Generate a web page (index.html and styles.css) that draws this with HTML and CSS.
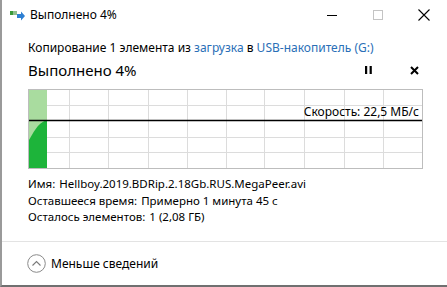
FILE: index.html
```html
<html lang="ru">
<head>
    <meta charset="UTF-8">
    <title>Выполнено 4%</title>
    <link rel="stylesheet" href="styles.css">
</head>
<body>
    <div class="window">
        <div class="titlebar">
            <svg class="app-icon" width="16" height="16" viewBox="0 0 16 16">
                <rect x="0" y="4" width="3" height="4" fill="#3a9a3a"/>
                <rect x="3" y="4" width="4" height="4" fill="#8fbf8f"/>
                <path d="M7 7H11V4.5L15 9L11 13.5V11H7Z" fill="#2d7fd3"/>
            </svg>
            <span class="title">Выполнено 4%</span>
            <div class="controls">
                <button class="ctl">
                    <svg width="10" height="10" viewBox="0 0 10 10"><line x1="0" y1="5.5" x2="10" y2="5.5" stroke="#000" stroke-width="1"/></svg>
                </button>
                <button class="ctl">
                    <svg width="10" height="10" viewBox="0 0 10 10"><rect x="0.5" y="0.5" width="9" height="9" fill="none" stroke="#c4c4c4" stroke-width="1"/></svg>
                </button>
                <button class="ctl">
                    <svg width="12" height="12" viewBox="0 0 12 12"><path d="M0.5 0.5L11.5 11.5M11.5 0.5L0.5 11.5" stroke="#000" stroke-width="1.1"/></svg>
                </button>
            </div>
        </div>

        <div class="content">
            <p class="source">Копирование 1 элемента из <a href="#">загрузка</a> в <a href="#">USB-накопитель (G:)</a></p>

            <div class="heading-row">
                <h1>Выполнено 4%</h1>
                <div class="actions">
                    <button class="act pause">
                        <svg width="7" height="8" viewBox="0 0 7 8"><rect x="0" y="0" width="2.2" height="8" fill="#000"/><rect x="4.6" y="0" width="2.2" height="8" fill="#000"/></svg>
                    </button>
                    <button class="act stop">
                        <svg width="9" height="9" viewBox="0 0 9 9"><path d="M1 1L8 8M8 1L1 8" stroke="#000" stroke-width="2"/></svg>
                    </button>
                </div>
            </div>

            <div class="chart">
                <svg width="393" height="78" viewBox="0 0 393 78">
                    <g stroke="#dcdcdc" stroke-width="1">
                        <line x1="40.5" y1="0" x2="40.5" y2="78"/>
                        <line x1="79.5" y1="0" x2="79.5" y2="78"/>
                        <line x1="119.5" y1="0" x2="119.5" y2="78"/>
                        <line x1="158.5" y1="0" x2="158.5" y2="78"/>
                        <line x1="197.5" y1="0" x2="197.5" y2="78"/>
                        <line x1="235.5" y1="0" x2="235.5" y2="78"/>
                        <line x1="275.5" y1="0" x2="275.5" y2="78"/>
                        <line x1="315.5" y1="0" x2="315.5" y2="78"/>
                        <line x1="354.5" y1="0" x2="354.5" y2="78"/>
                        <line x1="0" y1="15.5" x2="393" y2="15.5"/>
                        <line x1="0" y1="47.5" x2="393" y2="47.5"/>
                        <line x1="0" y1="62.5" x2="393" y2="62.5"/>
                    </g>
                    <rect x="0" y="0" width="18" height="78" fill="#a9dc9f"/>
                    <path d="M0 78V50C4 44 8 33 18 30V78Z" fill="#1db43a"/>
                    <line x1="0" y1="30.5" x2="393" y2="30.5" stroke="#000" stroke-width="1.3"/>
                </svg>
                <span class="speed">Скорость: 22,5 МБ/с</span>
            </div>

            <div class="details">
                <div class="row"><span class="label">Имя:</span><span class="value">Hellboy.2019.BDRip.2.18Gb.RUS.MegaPeer.avi</span></div>
                <div class="row"><span class="label">Оставшееся время:</span><span class="value">Примерно 1 минута 45 с</span></div>
                <div class="row"><span class="label">Осталось элементов:</span><span class="value">1 (2,08 ГБ)</span></div>
            </div>
        </div>

        <div class="footer">
            <button class="less">
                <svg width="19" height="19" viewBox="0 0 19 19">
                    <circle cx="9.5" cy="9.5" r="8.8" fill="none" stroke="#8a8a8a" stroke-width="1"/>
                    <path d="M5.5 11.5L9.5 7.5L13.5 11.5" fill="none" stroke="#7a7a7a" stroke-width="1.1"/>
                </svg>
                <span>Меньше сведений</span>
            </button>
        </div>
    </div>
</body>
</html>
```

FILE: styles.css
```css
html, body {
    margin: 0;
    padding: 0;
    background: #fff;
}
body {
    font-family: "Noto Sans", "Liberation Sans", sans-serif;
    font-size: 12px;
    color: #000;
}
button {
    font: inherit;
    color: inherit;
    background: none;
    border: 0;
    padding: 0;
    cursor: pointer;
}
.window {
    width: 447px;
    height: 287px;
    box-sizing: border-box;
    border-left: 2px solid #9a9a9a;
    border-bottom: 2px solid #707070;
    display: flex;
    flex-direction: column;
    overflow: hidden;
}
.titlebar {
    height: 30px;
    display: flex;
    align-items: center;
    padding-left: 8px;
}
.app-icon {
    margin-right: 4px;
}
.title {
    flex: 1;
    line-height: 16px;
}
.controls {
    display: flex;
    height: 30px;
}
.ctl {
    width: 46px;
    height: 30px;
    display: flex;
    align-items: center;
    justify-content: center;
}
.content {
    padding: 0 25px 0 26px;
}
.source {
    margin: 10px 0 0;
    line-height: 16px;
}
.source a {
    color: #2a6fb7;
    text-decoration: none;
}
.heading-row {
    display: flex;
    align-items: center;
    margin-top: 4px;
    height: 20px;
}
.heading-row h1 {
    flex: 1;
    margin: 0;
    font-size: 15px;
    font-weight: normal;
    line-height: 20px;
}
.actions {
    display: flex;
    align-items: center;
}
.act {
    height: 20px;
    display: flex;
    align-items: center;
    justify-content: center;
}
.pause {
    width: 20px;
    margin-right: 26px;
}
.stop {
    width: 20px;
    margin-right: -2px;
}
.chart {
    position: relative;
    margin-top: 9px;
    width: 393px;
    height: 78px;
    border: 1px solid #bdbdbd;
}
.chart svg {
    display: block;
}
.speed {
    position: absolute;
    right: 3px;
    top: 14px;
    line-height: 16px;
}
.details {
    margin-top: 7px;
    font-size: 11.5px;
}
.row {
    line-height: 16.5px;
    white-space: nowrap;
}
.value {
    margin-left: 4px;
}
.footer {
    margin-top: auto;
    height: 43px;
    border-top: 1px solid #e3e3e3;
    display: flex;
    align-items: center;
    padding-left: 25px;
}
.less {
    display: flex;
    align-items: center;
}
.less svg {
    margin-right: 5px;
}
```
